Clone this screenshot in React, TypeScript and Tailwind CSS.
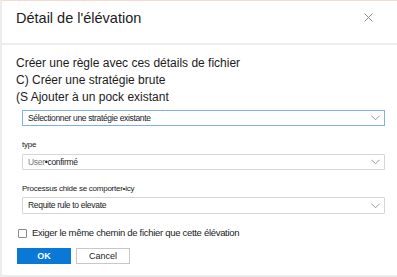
import React from "react";

function Chevron() {
  return (
    <svg width="9" height="6" viewBox="0 0 9 6" className="shrink-0">
      <path d="M0.5 0.8 L4.5 4.8 L8.5 0.8" fill="none" stroke="#8a8a8a" strokeWidth="0.9" />
    </svg>
  );
}

export default function App() {
  const font = { fontFamily: '"Liberation Sans", Arial, sans-serif' };
  return (
    <div className="w-[397px] h-[277px] bg-white overflow-hidden flex flex-col border-t border-t-[#f6d9d2] border-l-2 border-l-[#ececec]" style={font}>
      <div className="h-[42px] shrink-0 flex items-start justify-between pl-[14px] pr-[24px]">
        <div className="text-[14.5px] text-[#1b1b1b] mt-[8px] leading-[18px]">Détail de l'élévation</div>
        <svg width="9" height="9" viewBox="0 0 9 9" className="mt-[12px]">
          <path d="M0.5 0.5 L8.5 8.5 M8.5 0.5 L0.5 8.5" stroke="#8c8c8c" strokeWidth="1" />
        </svg>
      </div>
      <div className="h-[2px] shrink-0 bg-[#eeeeee]" />
      <div className="flex-1 flex flex-col pl-[14px] pr-[12px]">
        <div className="mt-[10px] text-[12px] leading-[17px] text-[#1b1b1b]">
          <div>Créer une règle avec ces détails de fichier</div>
          <div>C) Créer une stratégie brute</div>
          <div>(S Ajouter à un pock existant</div>
        </div>
        <div className="ml-[6px] mt-[4px] h-[16px] border border-[#7fb0e6] flex items-center justify-between pl-[5px] pr-[4px]">
          <span className="text-[8.5px] tracking-[-0.35px] text-[#1b1b1b]">Sélectionner une stratégie existante</span>
          <Chevron />
        </div>
        <div className="ml-[6px] mt-[14px] text-[8px] leading-[10px] text-[#1b1b1b] tracking-[-0.2px]">type</div>
        <div className="ml-[6px] mt-[4px] h-[16px] border border-[#d6d6d6] rounded-[1px] flex items-center justify-between pl-[5px] pr-[4px]">
          <span className="text-[8.5px] tracking-[-0.3px]"><span className="text-[#7a7a7a]">User</span><span className="text-[#1b1b1b]">•confirmé</span></span>
          <Chevron />
        </div>
        <div className="ml-[6px] mt-[14px] text-[8px] leading-[10px] text-[#1b1b1b] tracking-[-0.25px]">Processus chide se comporter•icy</div>
        <div className="ml-[6px] mt-[3px] h-[17px] border border-[#d6d6d6] rounded-[1px] flex items-center justify-between pl-[5px] pr-[4px]">
          <span className="text-[8.5px] tracking-[-0.3px] text-[#1b1b1b]">Requite rule to elevate</span>
          <Chevron />
        </div>
        <div className="mt-[12px] flex items-center gap-[5px] ml-[2px]">
          <div className="w-[9px] h-[9px] border border-[#8a8a8a] rounded-[1px]" />
          <span className="text-[9.5px] tracking-[-0.3px] text-[#1b1b1b]">Exiger le même chemin de fichier que cette élévation</span>
        </div>
        <div className="mt-[8px] flex gap-[5px] ml-[1px]">
          <div className="w-[54px] h-[16px] bg-[#0a78d6] text-white text-[9px] font-bold flex items-center justify-center">OK</div>
          <div className="w-[54px] h-[16px] border border-[#c8c8c8] text-[#1b1b1b] text-[9px] flex items-center justify-center">Cancel</div>
        </div>
      </div>
      <div className="h-[2px] shrink-0 bg-[#ececec]" />
    </div>
  );
}
